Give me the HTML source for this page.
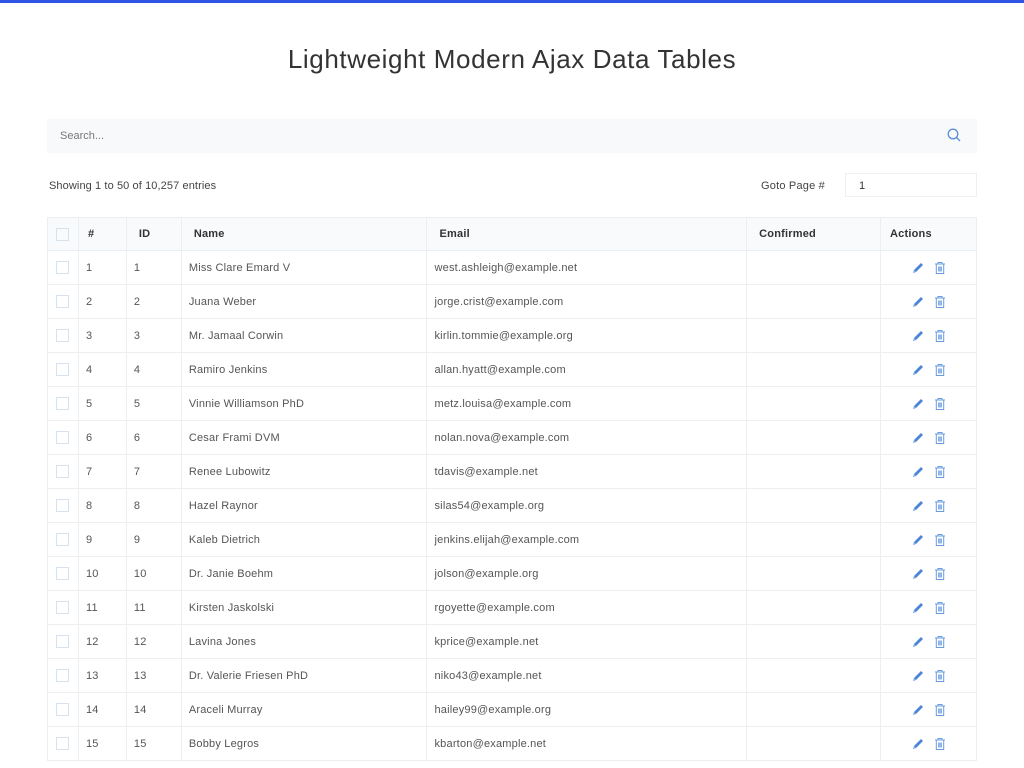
<!DOCTYPE html>
<html><head><meta charset="utf-8"><style>
*{box-sizing:border-box;margin:0;padding:0}
body{width:1024px;height:768px;overflow:hidden;background:#fff;font-family:"Liberation Sans",sans-serif;color:#555;position:relative}
.bar{position:absolute;top:0;left:0;width:1024px;height:3px;background:#2f55e4}
h1{position:absolute;top:44px;left:0;width:1024px;text-align:center;font-size:26px;font-weight:normal;color:#333;letter-spacing:0.6px}
.search{position:absolute;left:47px;top:119px;width:930px;height:34px;background:#f7f9fb;border-radius:3px}
.search span{position:absolute;left:13px;top:11px;font-size:11px;color:#777}
.search svg{position:absolute;right:16px;top:9px}
.show{position:absolute;left:49px;top:180px;font-size:11px;color:#444;letter-spacing:0.1px}
.goto{position:absolute;left:761px;top:180px;font-size:11px;color:#444;letter-spacing:0.2px}
.gin{position:absolute;left:845px;top:173px;width:132px;height:24px;border:1px solid #eef0f2;font-size:11px;color:#333;padding:6px 0 0 13px}
table{position:absolute;left:47px;top:217px;width:930px;border-collapse:collapse;font-size:11px;letter-spacing:0.2px}
td,th{border:1px solid #eceff2;height:34px;text-align:left;padding-left:7px;color:#555;font-weight:normal}
th{height:33px;background:#f8fafc;color:#333;font-weight:bold;padding-left:12px}
th.h{padding-left:9px}
.cb{display:inline-block;width:13px;height:13px;border:1px solid #d6e2ee;vertical-align:middle}
td.c,th.c{padding-left:8px}
td.a{text-align:center;padding-left:0}
</style></head><body>
<div class="bar"></div>
<h1>Lightweight Modern Ajax Data Tables</h1>
<div class="search"><span>Search...</span><svg width="14" height="14" viewBox="0 0 14 14"><circle cx="6" cy="6" r="4.8" fill="none" stroke="#5b8fd6" stroke-width="1.3"/><line x1="9.5" y1="9.5" x2="13" y2="13" stroke="#5b8fd6" stroke-width="1.3"/></svg></div>
<div class="show">Showing 1 to 50 of 10,257 entries</div>
<div class="goto">Goto Page #</div>
<div class="gin">1</div>
<table>
<colgroup><col style="width:31px"><col style="width:48px"><col style="width:55px"><col style="width:246px"><col style="width:320px"><col style="width:134px"><col style="width:96px"></colgroup>
<tr><th class="c"><span class="cb"></span></th><th class="h">#</th><th>ID</th><th>Name</th><th>Email</th><th>Confirmed</th><th class="h">Actions</th></tr>
<tbody id="tb">
</tbody></table>
<script>
var d=[["Miss Clare Emard V","west.ashleigh@example.net"],["Juana Weber","jorge.crist@example.com"],["Mr. Jamaal Corwin","kirlin.tommie@example.org"],["Ramiro Jenkins","allan.hyatt@example.com"],["Vinnie Williamson PhD","metz.louisa@example.com"],["Cesar Frami DVM","nolan.nova@example.com"],["Renee Lubowitz","tdavis@example.net"],["Hazel Raynor","silas54@example.org"],["Kaleb Dietrich","jenkins.elijah@example.com"],["Dr. Janie Boehm","jolson@example.org"],["Kirsten Jaskolski","rgoyette@example.com"],["Lavina Jones","kprice@example.net"],["Dr. Valerie Friesen PhD","niko43@example.net"],["Araceli Murray","hailey99@example.org"],["Bobby Legros","kbarton@example.net"]];
var ic='<svg width="14" height="14" viewBox="0 0 14 14" style="vertical-align:middle"><path d="M2 12 L3 9 L10 2 L12 4 L5 11 Z" fill="#4a86d8"/><path d="M2 12 L3 9 L5 11 Z" fill="#8db4ea"/></svg> <svg width="12" height="14" viewBox="0 0 12 14" style="vertical-align:middle;margin-left:6px"><path d="M1 3 H11 M4 3 V1.5 H8 V3 M2.3 3 V12.5 H9.7 V3 M4.7 5.5 V10.5 M6 5.5 V10.5 M7.3 5.5 V10.5" fill="none" stroke="#6a9de0" stroke-width="1"/></svg>';
var h='';d.forEach(function(r,i){h+='<tr><td class="c"><span class="cb"></span></td><td>'+(i+1)+'</td><td>'+(i+1)+'</td><td>'+r[0]+'</td><td>'+r[1]+'</td><td></td><td class="a">'+ic+'</td></tr>';});
document.getElementById('tb').innerHTML=h;
</script>
</body></html>
